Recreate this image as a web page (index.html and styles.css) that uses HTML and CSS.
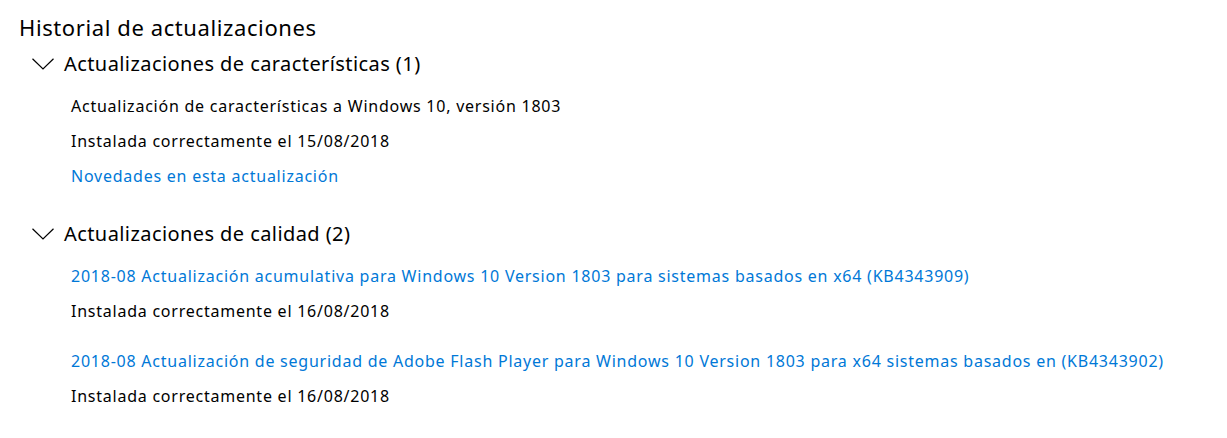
FILE: index.html
```html
<!DOCTYPE html>
<html lang="es">
<head>
<meta charset="utf-8">
<link rel="stylesheet" href="styles.css">
</head>
<body>
<main class="page">
  <h1 class="title">Historial de actualizaciones</h1>
  <section class="group">
    <div class="group-head">
      <svg class="chev" width="22" height="12" viewBox="0 0 22 12"><path d="M0.5 0.8 L11 11 L21.5 0.8" fill="none" stroke="#000" stroke-width="1.2"/></svg>
      <span>Actualizaciones de características (1)</span>
    </div>
    <div class="items">
      <div class="entry">
        <div class="line">Actualización de características a Windows 10, versión 1803</div>
        <div class="line">Instalada correctamente el 15/08/2018</div>
        <div class="line link">Novedades en esta actualización</div>
      </div>
    </div>
  </section>
  <section class="group">
    <div class="group-head">
      <svg class="chev" width="22" height="12" viewBox="0 0 22 12"><path d="M0.5 0.8 L11 11 L21.5 0.8" fill="none" stroke="#000" stroke-width="1.2"/></svg>
      <span>Actualizaciones de calidad (2)</span>
    </div>
    <div class="items">
      <div class="entry">
        <div class="line link">2018-08 Actualización acumulativa para Windows 10 Version 1803 para sistemas basados en x64 (KB4343909)</div>
        <div class="line">Instalada correctamente el 16/08/2018</div>
      </div>
      <div class="entry">
        <div class="line link">2018-08 Actualización de seguridad de Adobe Flash Player para Windows 10 Version 1803 para x64 sistemas basados en (KB4343902)</div>
        <div class="line">Instalada correctamente el 16/08/2018</div>
      </div>
    </div>
  </section>
</main>
</body>
</html>
```

FILE: styles.css
```css
html, body {
  margin: 0;
  padding: 0;
  background: #fff;
}
body {
  font-family: "Noto Sans", "Open Sans", sans-serif;
  color: #000;
}
.page {
  padding: 12px 0 0 19px;
}
.title {
  margin: 0;
  font-size: 22px;
  font-weight: 400;
  line-height: 30px;
  letter-spacing: 0.6px;
}
.group {
  display: flex;
  flex-direction: column;
}
.group-head {
  display: flex;
  align-items: center;
  gap: 10px;
  margin-top: 1px;
  padding-left: 13px;
  height: 40px;
  font-size: 20px;
  letter-spacing: 0.42px;
}
.chev {
  display: block;
  margin-top: 2px;
}
.items {
  padding: 6px 0 18px 52px;
  display: flex;
  flex-direction: column;
  gap: 15px;
}
.line {
  font-size: 16px;
  line-height: 35px;
  letter-spacing: 0.76px;
  white-space: nowrap;
}
.link {
  color: #0078d7;
}
```
